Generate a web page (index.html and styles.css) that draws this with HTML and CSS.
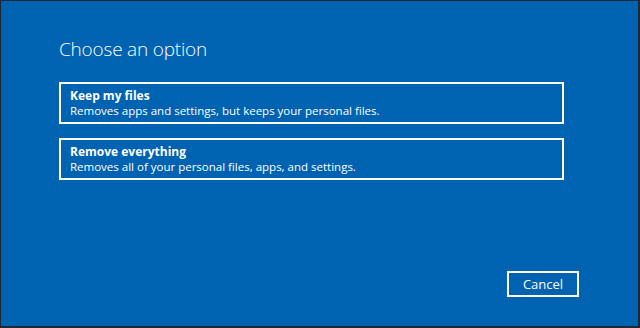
FILE: index.html
```html
<!doctype html>
<html>
<head>
<meta charset="UTF-8">
<title>Choose an option</title>
<link rel="stylesheet" href="styles.css">
</head>
<body>
	<div class="screen">
		<h1 class="title">Choose an option</h1>
		<ul class="options">
			<li class="option">
				<strong>Keep my files</strong>
				<span>Removes apps and settings, but keeps your personal files.</span>
			</li>
			<li class="option">
				<strong>Remove everything</strong>
				<span>Removes all of your personal files, apps, and settings.</span>
			</li>
		</ul>
		<div class="footer">
			<a class="btn" href="javascript:void(0);">Cancel</a>
		</div>
	</div>
</body>
</html>
```

FILE: styles.css
```css
*{margin:0;padding:0;box-sizing:border-box;}
body{font-family:"Open Sans","Liberation Sans",sans-serif;background:#1b2a3b;color:#fff;}
ul,li{list-style:none;}
a{text-decoration:none;color:#fff;}
/*screen start*/
.screen{width:640px;height:328px;background:#0063b1;border-style:solid;border-color:#1b2a3b;border-width:1px 2px 2px 1px;display:flex;flex-direction:column;padding:0 59px 0 58px;}
.title{font-size:19px;font-weight:300;line-height:28px;margin-top:34px;letter-spacing:-0.2px;}
/*options start*/
.options{width:505px;display:flex;flex-direction:column;gap:14px;margin-top:19px;}
.option{border:2px solid #fff;height:42px;padding:4px 9px 0;display:flex;flex-direction:column;font-size:11.5px;line-height:15px;}
.option strong{font-weight:700;font-size:12px;}
/*options end*/
.footer{margin-top:auto;margin-bottom:29px;display:flex;justify-content:flex-end;}
.btn{width:72px;height:26px;border:2px solid #fff;font-size:13px;display:flex;align-items:center;justify-content:center;}
/*screen end*/
```
